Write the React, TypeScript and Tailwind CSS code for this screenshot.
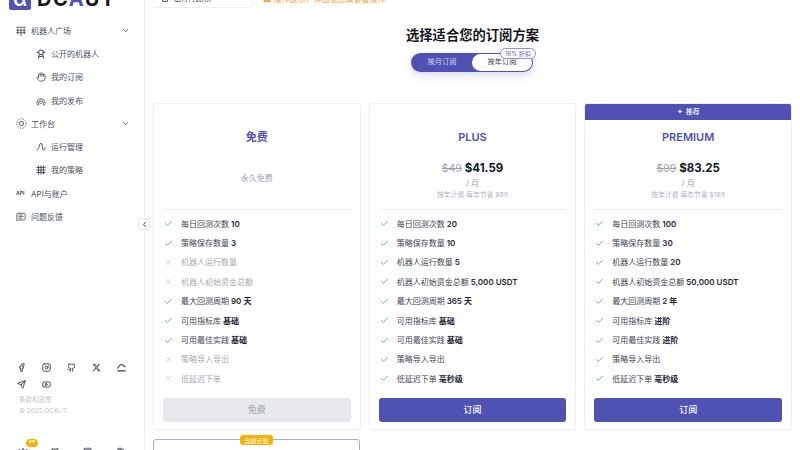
import { Check, X, ChevronDown, ChevronLeft, Hand, MessageSquareText, Facebook, Instagram, Github, Send, Youtube, Wallet, Crown, Gift } from "lucide-react";
import { FaXTwitter } from "react-icons/fa6";

const font = "font-['Inter','Noto_Sans_CJK_SC',sans-serif]";

type Feature = { label: string; value?: string; off?: boolean };

type Plan = {
  name: string;
  oldPrice?: string;
  price?: string;
  saving?: string;
  cta: string;
  features: Feature[];
};

const plans: Plan[] = [
  {
    name: "免费",
    cta: "免费",
    features: [
      { label: "每日回测次数", value: "10" },
      { label: "策略保存数量", value: "3" },
      { label: "机器人运行数量", off: true },
      { label: "机器人初始资金总额", off: true },
      { label: "最大回测周期", value: "90 天" },
      { label: "可用指标库", value: "基础" },
      { label: "可用最佳实践", value: "基础" },
      { label: "策略导入导出", off: true },
      { label: "低延迟下单", off: true },
    ],
  },
  {
    name: "PLUS",
    oldPrice: "$49",
    price: "$41.59",
    saving: "按年计费 每年节省 $89",
    cta: "订阅",
    features: [
      { label: "每日回测次数", value: "20" },
      { label: "策略保存数量", value: "10" },
      { label: "机器人运行数量", value: "5" },
      { label: "机器人初始资金总额", value: "5,000 USDT" },
      { label: "最大回测周期", value: "365 天" },
      { label: "可用指标库", value: "基础" },
      { label: "可用最佳实践", value: "基础" },
      { label: "策略导入导出" },
      { label: "低延迟下单", value: "毫秒级" },
    ],
  },
  {
    name: "PREMIUM",
    oldPrice: "$99",
    price: "$83.25",
    saving: "按年计费 每年节省 $189",
    cta: "订阅",
    features: [
      { label: "每日回测次数", value: "100" },
      { label: "策略保存数量", value: "30" },
      { label: "机器人运行数量", value: "20" },
      { label: "机器人初始资金总额", value: "50,000 USDT" },
      { label: "最大回测周期", value: "2 年" },
      { label: "可用指标库", value: "进阶" },
      { label: "可用最佳实践", value: "进阶" },
      { label: "策略导入导出" },
      { label: "低延迟下单", value: "毫秒级" },
    ],
  },
];

// hand drawn nav icons, lucide has nothing close for these
function BotsIcon() {
  return (
    <svg width="10" height="10" viewBox="0 0 12 12" fill="none" stroke="currentColor" strokeWidth="1.2" strokeLinecap="round">
      <path d="M1 1.5h2.5M4.8 1.5h2.4M8.5 1.5H11" />
      <path d="M2.2 3.5v6M6 3.5v8M9.8 3.5v6" />
      <path d="M1 5h2.4M4.8 5h2.4M8.6 5H11M1 8h2.4M4.8 8h2.4M8.6 8H11" />
    </svg>
  );
}

function BotIcon() {
  return (
    <svg width="10" height="10" viewBox="0 0 12 12" fill="none" stroke="currentColor" strokeWidth="1.3" strokeLinecap="round" strokeLinejoin="round">
      <circle cx="6" cy="4" r="2.8" />
      <path d="M1.5 4h1.5M9 4h1.5M4 7.2 2.8 11M8 7.2 9.2 11M3.6 9h4.8" />
    </svg>
  );
}

function BroadcastIcon() {
  return (
    <svg width="10" height="10" viewBox="0 0 12 12" fill="none" stroke="currentColor" strokeWidth="1.2" strokeLinecap="round">
      <path d="M1 8.5a5 5 0 0 1 10 0" />
      <path d="M3 9a3 3 0 0 1 6 0" />
      <path d="M1.5 10.5h1.5M9 10.5h1.5" />
      <circle cx="6" cy="9" r="0.9" fill="currentColor" stroke="none" />
    </svg>
  );
}

function WorkbenchIcon() {
  return (
    <svg width="11" height="11" viewBox="0 0 12 12" fill="none" stroke="currentColor" strokeWidth="1">
      <circle cx="6" cy="6" r="5.2" strokeDasharray="1.4 1.4" />
      <rect x="4" y="4" width="4" height="4" rx="0.5" />
    </svg>
  );
}

function WaveIcon() {
  return (
    <svg width="10" height="10" viewBox="0 0 12 12" fill="none" stroke="currentColor" strokeWidth="1.2" strokeLinecap="round">
      <path d="M1 9.5c1.5 0 2-1 2.5-3S4.500 1.500 6 1.500 7.500 5 8 8c.3 1.500 1 2 1.500 1.500S11 8 11 7" />
    </svg>
  );
}

function HashIcon() {
  return (
    <svg width="10" height="10" viewBox="0 0 12 12" fill="none" stroke="currentColor" strokeWidth="1.3">
      <path d="M3 0.500v11M6 0.500v11M9 0.500v11M0.500 3h11M0.500 6h11M0.500 9h11" />
    </svg>
  );
}

function HumpIcon() {
  return (
    <svg width="9" height="9" viewBox="0 0 12 12" fill="none" stroke="currentColor" strokeWidth="1.5" strokeLinecap="round">
      <path d="M1 7c1.500-3 3-5 5-5s2 2 5 3" />
      <path d="M1 10.500h10" />
    </svg>
  );
}

function NavItem({ icon, label, sub, open }: { icon: React.ReactNode; label: string; sub?: boolean; open?: boolean }) {
  return (
    <div className={`flex h-[23.3px] items-center text-[8px] text-[#4b5260] ${sub ? "pl-[36px] pr-3" : "pl-[16px] pr-3"}`}>
      <span className="flex w-[15px] shrink-0 items-center text-[#4b5468]">{icon}</span>
      <span className="flex-1">{label}</span>
      {open && <ChevronDown size={9} strokeWidth={2} className="mr-[2px] text-[#374151]" />}
    </div>
  );
}

function PlanCard({ plan, recommended }: { plan: Plan; recommended?: boolean }) {
  const isFree = !plan.price;
  return (
    <div className="flex h-[327px] flex-col overflow-hidden rounded-[3px] border border-[#eef0f3] bg-white shadow-[0_1px_2px_rgba(0,0,0,0.03)]">
      {recommended ? (
        <div className="flex h-[16px] shrink-0 items-center justify-center gap-[3px] bg-[#4f51b3] text-[7px] font-medium text-white">
          <span className="text-[7px]">✦</span>
          推荐
        </div>
      ) : (
        <div className="h-[16px] shrink-0" />
      )}
      <div className="flex h-[89px] shrink-0 flex-col items-center">
        <div className="mt-[9px] text-[11px] leading-[16px] font-semibold text-[#4f51b3]">{plan.name}</div>
        {isFree ? (
          <div className="mt-[27px] text-[8px] text-[#9ca3af]">永久免费</div>
        ) : (
          <>
            <div className="mt-[15px] flex items-baseline gap-[3px] leading-[16px]">
              <span className="text-[10.5px] font-normal text-[#9ca3af] line-through">{plan.oldPrice}</span>
              <span className="text-[11.5px] font-bold text-[#111827]">{plan.price}</span>
            </div>
            <div className="mt-[1px] text-[8px] leading-[10px] text-[#9ca3af]">/ 月</div>
            <div className="mt-[2px] text-[6.8px] leading-[10px] text-[#b0b5bd]">{plan.saving}</div>
          </>
        )}
      </div>
      <div className="mx-[9px] shrink-0 border-t border-[#eceef1]" />
      <ul className="mx-[10px] mt-[4px] flex flex-col">
        {plan.features.map((f) => (
          <li key={f.label} className="flex h-[19.4px] items-center text-[8px]">
            {f.off ? (
              <X size={9} strokeWidth={1.5} className="mr-[8px] shrink-0 text-[#b4b9c1]" />
            ) : (
              <Check size={9} strokeWidth={2} className="mr-[8px] shrink-0 text-[#22a87a]" />
            )}
            <span className={f.off ? "text-[#a6abb3]" : "text-[#3f4654]"}>{f.label}</span>
            {f.value && <span className="ml-[2px] font-semibold text-[#1f2937]">{f.value}</span>}
          </li>
        ))}
      </ul>
      <div className="mx-[9px] mt-[9px]">
        <div
          className={`flex h-[24px] items-center justify-center rounded-[3px] text-[9px] font-medium ${
            isFree ? "bg-[#e7e9ec] text-[#a9aeb6]" : "bg-[#4f51b3] text-white"
          }`}
        >
          {plan.cta}
        </div>
      </div>
    </div>
  );
}

export default function App() {
  return (
    <div className={`relative flex h-[450px] w-[800px] overflow-hidden bg-white ${font}`}>
      <aside className="flex h-[450px] w-[145px] shrink-0 flex-col border-r border-[#eef0f3]">
        <div className="-mt-[12px] ml-[9px] flex h-[22px] shrink-0 items-center gap-[6px]">
          <div className="flex h-[22px] w-[22px] items-center justify-center rounded-[2px] bg-[#4f51b3] text-[20px] leading-[20px] font-semibold text-white">
            α
          </div>
          <div className="text-[20px] leading-[22px] font-bold tracking-[1.5px] text-[#14161c]">
            DC<span className="text-[#4f51b3]">A</span>UT
          </div>
        </div>
        <nav className="mt-[9px] flex flex-col">
          <NavItem icon={<BotsIcon />} label="机器人广场" open />
          <NavItem sub icon={<BotIcon />} label="公开的机器人" />
          <NavItem sub icon={<Hand size={10} />} label="我的订阅" />
          <NavItem sub icon={<BroadcastIcon />} label="我的发布" />
          <NavItem icon={<WorkbenchIcon />} label="工作台" open />
          <NavItem sub icon={<WaveIcon />} label="运行管理" />
          <NavItem sub icon={<HashIcon />} label="我的策略" />
          <NavItem icon={<span className="text-[5px] font-bold">API</span>} label="API与账户" />
          <NavItem icon={<MessageSquareText size={10} />} label="问题反馈" />
        </nav>
        <div className="mt-auto -mb-[7px] pl-[17px]">
          <div className="grid w-[125px] grid-cols-5 gap-y-[8px] text-[#374151]">
            <Facebook size={9} strokeWidth={2.4} />
            <Instagram size={9} strokeWidth={2.4} />
            <Github size={9} strokeWidth={2.4} />
            <FaXTwitter size={9} />
            <HumpIcon />
            <Send size={9} strokeWidth={2.4} />
            <Youtube size={9} strokeWidth={2.4} />
          </div>
          <div className="mt-[6px] ml-[2px] text-[6.5px] leading-[11px] text-[#c3c7cd]">条款和政策</div>
          <div className="ml-[2px] text-[6.5px] leading-[11px] text-[#c3c7cd]">© 2025 DCAUT</div>
          <div className="relative mt-[30px] flex h-[10px] w-[108px] justify-between pl-[1px] text-[#374151]">
            <Crown size={10} />
            <Gift size={10} />
            <Wallet size={10} />
            <Hand size={10} />
            <div className="absolute -top-[8px] left-[9px] flex h-[8px] w-[12px] items-center justify-center rounded-full bg-[#f5b30b] text-[3.5px] font-bold text-white">
              VIP
            </div>
          </div>
        </div>
      </aside>

      <button className="absolute top-[218px] left-[138px] flex h-[12px] w-[12px] items-center justify-center rounded-[2px] border border-[#e5e7eb] bg-white text-[#374151]">
        <ChevronLeft size={9} strokeWidth={2.5} />
      </button>

      <main className="min-w-0 flex-1 px-[8px]">
        <div className="-mt-[6px] flex h-[14px] items-start">
          <div className="flex h-[14px] w-[100px] items-start rounded-[3px] border border-[#eef0f3] bg-white pl-[8px]">
            <span className="mt-[1px] h-[6px] w-[6px] rounded-[1px] border border-[#4b5468]" />
            <span className="ml-[6px] text-[7px] leading-[8px] text-[#3f4654]">运行付费用户</span>
          </div>
          <div className="ml-[10px] text-[8px] leading-[10px] text-[#f59e3b]">⚠ 操作提示，详细信息请查看操作</div>
        </div>
        <h1 className="mt-[18px] text-center text-[13.3px] leading-[18px] font-semibold text-[#14161c]">选择适合您的订阅方案</h1>
        <div className="mt-[9px] flex justify-center">
          <div className="relative mr-[1px] flex h-[19px] w-[122px] rounded-full bg-[#4f51b3] p-[1px] shadow-[0_3px_8px_rgba(79,81,179,0.22)]">
            <div className="flex flex-1 items-center justify-center text-[7.2px] text-[#d6d7f2]">按月订阅</div>
            <div className="flex w-[60px] items-center justify-center rounded-full bg-white text-[7.2px] text-[#374151]">按年订阅</div>
            <div className="absolute -top-[5px] -right-[3px] flex h-[11px] w-[36px] items-center justify-center rounded-full border border-[#8c8ed8] bg-white text-[6px] text-[#5b5dbb]">
              16% 折扣
            </div>
          </div>
        </div>
        <div className="mt-[31px] grid grid-cols-3 gap-[8px]">
          <PlanCard plan={plans[0]} />
          <PlanCard plan={plans[1]} />
          <PlanCard plan={plans[2]} recommended />
        </div>
        <div className="relative mt-[9px] h-[40px] w-[207px] rounded-[3px] border border-[#a9a9e0]">
          <div className="absolute -top-[5px] left-[86px] flex h-[10px] w-[33px] items-center justify-center rounded-[3px] bg-[#f5b30b] text-[6px] text-white">
            当前计划
          </div>
        </div>
      </main>
    </div>
  );
}
